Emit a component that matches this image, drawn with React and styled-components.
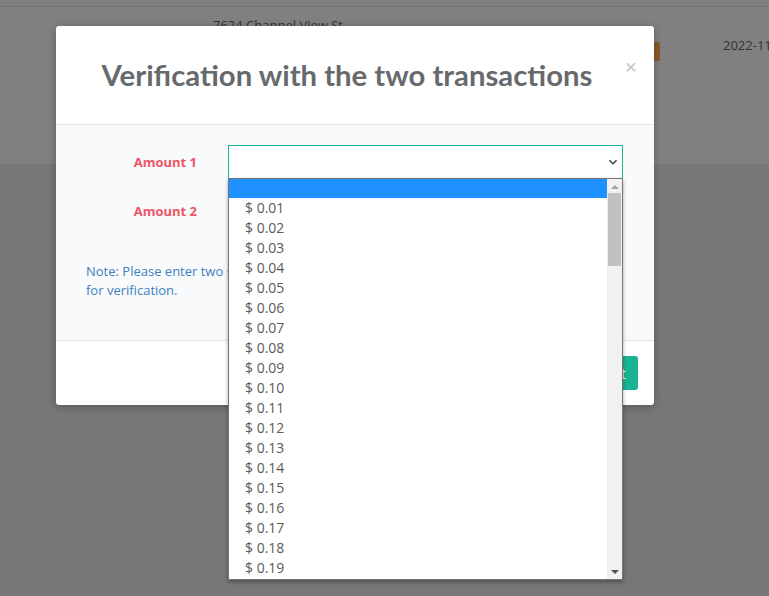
import React from "react";
import styled, { createGlobalStyle } from "styled-components";

const GlobalStyle = createGlobalStyle`
  html, body {
    margin: 0;
    padding: 0;
    background-color: #777777;
    font-family: "Open Sans", "Noto Sans", sans-serif;
  }
`;

const Backdrop = styled.div`
  position: relative;
  width: 769px;
  height: 596px;
  overflow: hidden;
  background-color: #777777;
`;

const PageTop = styled.div`
  height: 158px;
  background-color: #808080;
  border-top: 6px solid #808080;
  border-bottom: 1px solid #7a7a7a;
`;

const TableRow = styled.div`
  display: grid;
  grid-template-columns: 213px 427px 83px 1fr;
  border-top: 1px solid #737373;
  height: 60px;
  color: #333333;
  font-size: 13px;
`;

const Cell = styled.div`
  padding-top: ${(p) => p.top || 9}px;
  white-space: nowrap;
`;

const Badge = styled.span`
  display: inline-block;
  width: 20px;
  height: 19px;
  margin-top: 26px;
  border-radius: 2px;
  background-color: #8a5a28;
`;

const Modal = styled.div`
  position: absolute;
  left: 56px;
  top: 26px;
  width: 598px;
  background-color: #ffffff;
  border-radius: 3px;
  box-shadow: 0 2px 8px rgba(0, 0, 0, 0.25);
`;

const ModalHeader = styled.div`
  position: relative;
  height: 98px;
  padding-right: 16px;
  display: flex;
  align-items: center;
  justify-content: center;
  border-bottom: 1px solid #e5e5e5;
`;

const Title = styled.h4`
  margin: 0 0 2px 0;
  font-family: "Lato", "Noto Sans", sans-serif;
  font-weight: 700;
  font-size: 29.3px;
  color: #676a6c;
`;

const Close = styled.span`
  position: absolute;
  right: 17px;
  top: 29px;
  font-family: "Liberation Sans", sans-serif;
  font-size: 21px;
  color: #c4c4c4;
`;

const ModalBody = styled.div`
  background-color: #f8fafb;
  padding: 20px 31px 40px 30px;
`;

const FormRow = styled.div`
  display: grid;
  grid-template-columns: 111px 1fr;
  column-gap: 31px;
  align-items: center;
  margin-bottom: 15px;
`;

const Label = styled.label`
  text-align: right;
  font-size: 13px;
  font-weight: 700;
  color: #ed5565;
  margin-top: -1px;
`;

const SelectWrap = styled.div`
  position: relative;
`;

const SelectBox = styled.div`
  height: 32px;
  background-color: #ffffff;
  border: 1px solid ${(p) => (p.active ? "#1ab394" : "#e5e6e7")};
  display: flex;
  align-items: center;
  justify-content: flex-end;
  padding-right: 4px;
`;

const Note = styled.p`
  margin: 34px 0 0 0;
  font-size: 13px;
  line-height: 19px;
  color: #3f7fc0;
`;

const ModalFooter = styled.div`
  height: 34px;
  padding: 15px 16px 15px 15px;
  border-top: 1px solid #e5e5e5;
  display: flex;
  justify-content: flex-end;
`;

const Button = styled.button`
  height: 34px;
  padding: 0 12px;
  border: none;
  border-radius: 3px;
  background-color: #1ab394;
  color: #ffffff;
  font-size: 14px;
  font-family: inherit;
`;

const Dropdown = styled.div`
  position: absolute;
  left: 0;
  top: 33px;
  width: 393px;
  height: 400px;
  border: 1px solid #767676;
  background-color: #ffffff;
  box-shadow: 0 2px 4px rgba(0, 0, 0, 0.35);
  display: flex;
  z-index: 5;
`;

const OptionList = styled.div`
  flex: 1;
  overflow: hidden;
`;

const Option = styled.div`
  height: ${(p) => (p.selected ? 19 : 20)}px;
  line-height: 20px;
  padding-left: 16px;
  font-size: 14px;
  color: #5a5a5a;
  background-color: ${(p) => (p.selected ? "#1e90ff" : "transparent")};
`;

const Scrollbar = styled.div`
  width: 15px;
  background-color: #f1f1f1;
  display: flex;
  flex-direction: column;
  align-items: center;
`;

const Arrow = styled.div`
  width: 0;
  height: 0;
  margin: ${(p) => (p.up ? "6px 0 4px" : "auto 0 5px")};
  border-left: 4px solid transparent;
  border-right: 4px solid transparent;
  ${(p) =>
    p.up ? "border-bottom: 4px solid #a3a3a3;" : "border-top: 4px solid #505050;"}
`;

const Thumb = styled.div`
  width: 13px;
  height: 73px;
  background-color: #c1c1c1;
`;

const Chevron = () => (
  <svg width="10" height="10" viewBox="0 0 10 10">
    <path d="M1.5 3.2 L5 6.7 L8.5 3.2" fill="none" stroke="#444" strokeWidth="1.6" />
  </svg>
);

const amounts = Array.from({ length: 19 }, (_, i) => `$ 0.${String(i + 1).padStart(2, "0")}`);

export default function App() {
  return (
    <Backdrop>
      <GlobalStyle />
      <PageTop>
        <TableRow>
          <Cell />
          <Cell>7624 Channel View St</Cell>
          <Cell top={0}>
            <Badge />
          </Cell>
          <Cell top={29}>2022-11-08</Cell>
        </TableRow>
      </PageTop>

      <Modal>
        <ModalHeader>
          <Title>Verification with the two transactions</Title>
          <Close>×</Close>
        </ModalHeader>
        <ModalBody>
          <FormRow>
            <Label>Amount 1</Label>
            <SelectWrap>
              <SelectBox active>
                <Chevron />
              </SelectBox>
              <Dropdown>
                <OptionList>
                  <Option selected />
                  {amounts.map((a) => (
                    <Option key={a}>{a}</Option>
                  ))}
                </OptionList>
                <Scrollbar>
                  <Arrow up />
                  <Thumb />
                  <Arrow />
                </Scrollbar>
              </Dropdown>
            </SelectWrap>
          </FormRow>
          <FormRow>
            <Label>Amount 2</Label>
            <SelectWrap>
              <SelectBox>
                <Chevron />
              </SelectBox>
            </SelectWrap>
          </FormRow>
          <Note>
            Note: Please enter two small amounts that were deposited to your account
            <br />
            for verification.
          </Note>
        </ModalBody>
        <ModalFooter>
          <Button>Submit</Button>
        </ModalFooter>
      </Modal>
    </Backdrop>
  );
}
